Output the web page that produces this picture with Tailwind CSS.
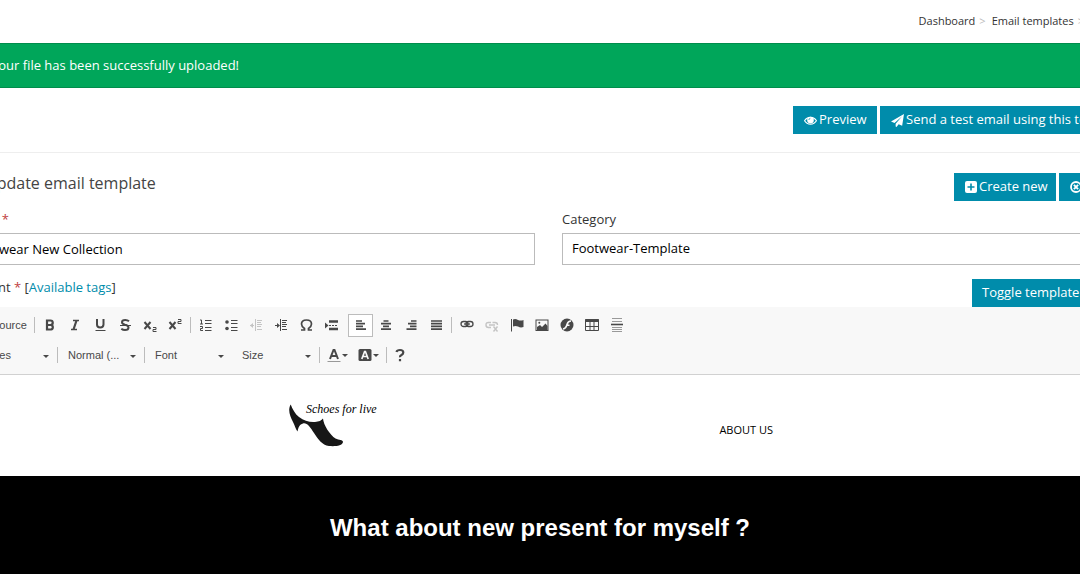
<!DOCTYPE html>
<html lang="en">
<head>
    <meta charset="UTF-8">
    <meta name="viewport" content="width=device-width, initial-scale=1.0">
    <title>Update email template</title>
    <script src="https://cdn.jsdelivr.net/npm/@tailwindcss/browser@4"></script>
</head>
<body class="bg-white overflow-hidden font-['Open_Sans',sans-serif] text-[13px] text-[#333]">
    <div class="overflow-hidden min-h-screen flex flex-col">
        <!-- Breadcrumbs -->
        <nav class="h-[43px] -mr-[55px] flex items-center justify-end gap-1 text-[11px]" aria-label="Breadcrumb">
            <a href="#">Dashboard</a><span class="text-[#bbb] pr-[2px]">&gt;</span>
            <a href="#">Email templates</a><span class="text-[#bbb] pr-[2px]">&gt;</span>
            <span class="w-[45px]">Update</span>
        </nav>

        <!-- Alert -->
        <div class="h-[45px] bg-[#00a65a] border-y border-[#008d4c] text-white flex items-center" role="alert">
            <p class="-ml-[9px]">Your file has been successfully uploaded!</p>
        </div>

        <main class="-ml-[38px] -mr-[55px] grow flex flex-col">
            <div class="pt-[18px] pb-[18px] border-b border-[#eee] flex justify-end gap-[3px] text-white whitespace-nowrap">
                <button class="w-[84px] h-7 pl-[11px] bg-[#008cab] flex items-center gap-[2px]">
                    <svg class="w-[13px] h-[13px] shrink-0" viewBox="0 0 14 14" fill="none" stroke="currentColor"><path d="M.6 7.3C3.5 2.4 10.500 2.400 13.400 7.300C10.500 12.200 3.500 12.200 .6 7.300Z" stroke-width="1.200"/><circle cx="7" cy="6.500" r="3.600" fill="currentColor" stroke="none"/><path d="M5.200 6.400Q5.300 4.900 6.800 4.700" stroke="#008cab" stroke-width=".8"/></svg>
                    Preview
                </button>
                <button class="w-[255px] h-7 pl-[11px] bg-[#008cab] flex items-center gap-[2px]">
                    <svg class="w-[13px] h-[13px] shrink-0" viewBox="0 0 14 14" fill="currentColor"><path d="M14 0L12 12.700L8.200 11.100L6 13.900L5 13.500V10.500L12 2.500L3.800 9.600L0 8Z"/></svg>
                    Send a test email using this template
                </button>
            </div>

            <!-- Heading row -->
            <div class="pt-5 flex justify-between items-start">
                <h1 class="h-7 -mt-1 flex items-center gap-[7px] text-[16px] text-[#444]">
                    <svg class="w-4 h-4" viewBox="0 0 16 16" fill="currentColor"><path d="M1 3h14v2l-7 4-7-4zM1 6l7 4 7-4v7H1z"/></svg>
                    Update email template
                </h1>
                <div class="flex gap-[3px] text-white whitespace-nowrap">
                    <button class="w-[102px] h-7 pl-[11px] bg-[#008cab] flex items-center gap-[2px]">
                        <svg class="w-3 h-3 shrink-0" viewBox="0 0 12 12"><rect width="12" height="12" rx="2" fill="currentColor"/><path d="M6 2.500v7M2.500 6h7" stroke="#008cab" stroke-width="1.600"/></svg>
                        Create new
                    </button>
                    <button class="w-[76px] h-7 pl-[11px] bg-[#008cab] flex items-center gap-[3px]">
                        <svg class="w-3 h-3 shrink-0" viewBox="0 0 12 12" fill="none" stroke="currentColor"><circle cx="6" cy="6" r="5" stroke-width="1.800"/><path d="M3.900 3.900l4.200 4.200M8.100 3.900l-4.200 4.200" stroke-width="1.900"/></svg>
                        Cancel
                    </button>
                </div>
            </div>

            <!-- Fields -->
            <div class="pt-2 grid grid-cols-2 gap-[27px]">
                <div>
                    <label for="name" class="block h-6 leading-5">Name <span class="text-[#c04040]">*</span></label>
                    <input id="name" type="text" value="Footwear New Collection" class="w-full h-8 px-[9px] border border-[#bbb] text-black">
                </div>
                <div>
                    <label for="category" class="block h-6 leading-5">Category</label>
                    <select id="category" class="w-full h-8 px-[9px] border border-[#bbb] bg-white text-black appearance-none">
                        <option>Footwear-Template</option>
                    </select>
                </div>
            </div>
            <div class="pt-[14px] flex justify-between items-start">
                <p class="leading-4">Content <span class="text-[#c04040]">*</span> [<a href="#" class="text-[#008cab]">Available tags</a>]</p>
                <button class="w-[163px] h-7 pl-[10px] text-left bg-[#008cab] text-white whitespace-nowrap">Toggle template editor</button>
            </div>

            <!-- Editor toolbar -->
            <div class="bg-[#f8f8f8] border-b border-[#d1d1d1] h-[68px] pl-[9px] pt-[3px] text-[11px] text-[#484848] font-['Liberation_Sans',sans-serif]" role="toolbar">
                <div class="h-[30px] flex items-center">
                    <button class="w-[63px] pl-[2px] flex items-center gap-[3px]">
                        <svg class="w-4 h-4" viewBox="0 0 16 16" fill="none" stroke="currentColor"><path d="M3 1.500h7l3 3v10H3z"/></svg>
                        Source
                    </button>
                    <span class="w-px h-4 bg-[#bcbcbc] mr-[2px]"></span>
                    <button class="w-[25px] h-[23px] flex items-center justify-center" aria-label="Bold"><svg class="w-4 h-4" viewBox="0 0 16 16" fill="none" stroke="currentColor"><path d="M5 3.500H8.500a2 2 0 0 1 0 4.500H5zM5 8h4a2.300 2.300 0 0 1 0 4.500H5z" stroke-width="2.200"/></svg></button>
                    <button class="w-[25px] h-[23px] flex items-center justify-center" aria-label="Italic"><svg class="w-4 h-4" viewBox="0 0 16 16" fill="none" stroke="currentColor"><path d="M6 3.500h6M4 12.500h6" stroke-width="1.300"/><path d="M9.500 3.500l-3 9" stroke-width="2.200"/></svg></button>
                    <button class="w-[25px] h-[23px] flex items-center justify-center" aria-label="Underline"><svg class="w-4 h-4" viewBox="0 0 16 16" fill="none" stroke="currentColor"><path d="M5 2v5.500q0 3 3.200 3t3.300-3V2" stroke-width="2"/><path d="M3.500 13.500h10"/></svg></button>
                    <button class="w-[25px] h-[23px] flex items-center justify-center" aria-label="Strikethrough"><svg class="w-4 h-4" viewBox="0 0 16 16" fill="none" stroke="currentColor"><path d="M12 4.300Q10.500 3 8.300 3 5 3 5 5.300 5 7 8 7.800 11.500 8.600 11.500 10.500 11.500 13 8 13 6 13 4.300 11.700" stroke-width="2"/><path d="M3 8.500h11"/></svg></button>
                    <button class="w-[25px] h-[23px] flex items-center justify-center" aria-label="Subscript"><svg class="w-4 h-4" viewBox="0 0 16 16" fill="none" stroke="currentColor"><path d="M2.500 5l6 7M8.500 5l-6 7" stroke-width="2"/><path d="M11 10.500h3v2h-3v2h3.500"/></svg></button>
                    <button class="w-[25px] h-[23px] flex items-center justify-center" aria-label="Superscript"><svg class="w-4 h-4" viewBox="0 0 16 16" fill="none" stroke="currentColor"><path d="M2.500 5l6 7M8.500 5l-6 7" stroke-width="2"/><path d="M11 2.500h3v2h-3v2h3.500"/></svg></button>
                    <span class="w-px h-4 bg-[#bcbcbc] ml-[3px] mr-[2px]"></span>
                    <button class="w-[25px] h-[23px] flex items-center justify-center" aria-label="Numbered list"><svg class="w-4 h-4" viewBox="0 0 16 16" fill="none" stroke="currentColor"><path d="M2 3h1.500v4M2 7h3M2 9.500h2.500v2H2.500v2H5M7 3.500h6.500M7 6.500h6.500M7 10.500h6.500M7 13.500h6.500"/></svg></button>
                    <button class="w-[25px] h-[23px] flex items-center justify-center" aria-label="Bulleted list"><svg class="w-4 h-4" viewBox="0 0 16 16" fill="none" stroke="currentColor"><path d="M8 3.500h6.500M8 6.500h6.500M8 10.500h6.500M8 13.500h6.500"/><circle cx="4" cy="5" r="1.800" fill="currentColor" stroke="none"/><circle cx="4" cy="11.500" r="1.800" fill="currentColor" stroke="none"/></svg></button>
                    <button class="w-[25px] h-[23px] flex items-center justify-center text-[#c4c4c4]" aria-label="Decrease indent" disabled><svg class="w-4 h-4" viewBox="0 0 16 16" fill="none" stroke="currentColor"><path d="M7.500 2v12M9 3.500h5M9 5.500h4M9 7.500h5M9 9.500h4M9 12.500h5M2 8.500h4"/><path d="M5 6v5L2 8.500z" fill="currentColor" stroke="none"/></svg></button>
                    <button class="w-[25px] h-[23px] flex items-center justify-center" aria-label="Increase indent"><svg class="w-4 h-4" viewBox="0 0 16 16" fill="none" stroke="currentColor"><path d="M7.500 2v12M9 3.500h5M9 5.500h4M9 7.500h5M9 9.500h4M9 12.500h5M2 8.500h3"/><path d="M4 6v5L7 8.500z" fill="currentColor" stroke="none"/></svg></button>
                    <button class="w-[25px] h-[23px] flex items-center justify-center" aria-label="Special character"><svg class="w-4 h-4" viewBox="0 0 16 16" fill="none" stroke="currentColor"><path d="M3 13h3.500v-1.500Q3.500 9.500 3.500 7 3.500 3 8.500 3t5 4q0 2.500-3 4.500V13H14" stroke-width="1.700"/></svg></button>
                    <button class="w-[25px] h-[23px] flex items-center justify-center" aria-label="Page break"><svg class="w-4 h-4" viewBox="0 0 16 16" fill="none" stroke="currentColor"><path d="M6 4.500h9M6 12h9" stroke-width="2.500"/><path d="M6 8.500h9" stroke-dasharray="2 1"/><path d="M2 5.500v6L5.500 8.500z" fill="currentColor" stroke="none"/></svg></button>
                    <button class="w-[25px] h-[23px] ml-[5px] border border-[#bcbcbc] bg-white flex items-center justify-center" aria-label="Align left" aria-pressed="true"><svg class="w-4 h-4" viewBox="0 0 16 16" fill="none" stroke="currentColor"><path d="M3 4h6M3 6.700h9M3 9.400h7M3 12.100h10" stroke-width="1.700"/></svg></button>
                    <button class="w-[25px] h-[23px] flex items-center justify-center" aria-label="Center"><svg class="w-4 h-4" viewBox="0 0 16 16" fill="none" stroke="currentColor"><path d="M5.500 4h5M3 6.700h10M5 9.400h6M3 12.100h10" stroke-width="1.700"/></svg></button>
                    <button class="w-[25px] h-[23px] flex items-center justify-center" aria-label="Align right"><svg class="w-4 h-4" viewBox="0 0 16 16" fill="none" stroke="currentColor"><path d="M8 4h5.500M5 6.700h8.500M7 9.400h6.500M3.500 12.100h10" stroke-width="1.700"/></svg></button>
                    <button class="w-[25px] h-[23px] flex items-center justify-center" aria-label="Justify"><svg class="w-4 h-4" viewBox="0 0 16 16" fill="none" stroke="currentColor"><path d="M3 4h11M3 6.700h11M3 9.400h11M3 12.100h11" stroke-width="1.700"/></svg></button>
                    <span class="w-px h-4 bg-[#bcbcbc] ml-[3px] mr-[2px]"></span>
                    <button class="w-[25px] h-[23px] flex items-center justify-center" aria-label="Link"><svg class="w-4 h-4" viewBox="0 0 16 16" fill="none" stroke="currentColor"><rect x="2" y="4.500" width="7" height="5" rx="2.500" stroke-width="1.300"/><rect x="7" y="4.500" width="7" height="5" rx="2.500" stroke-width="1.300"/><path d="M5 7h6" stroke-width="1.300"/></svg></button>
                    <button class="w-[25px] h-[23px] flex items-center justify-center text-[#c4c4c4]" aria-label="Unlink" disabled><svg class="w-4 h-4" viewBox="0 0 16 16" fill="none" stroke="currentColor"><path d="M7 5.500H4.500Q2 5.500 2 8t2.500 2.500H7M8.500 5.500H11q2.500 0 2.500 2.500M5 8h6" stroke-width="1.400"/><path d="M9.500 9.500l4 5M13.500 9.500l-4 5" stroke-width="1.400"/></svg></button>
                    <button class="w-[25px] h-[23px] flex items-center justify-center" aria-label="Anchor"><svg class="w-4 h-4" viewBox="0 0 16 16" fill="none" stroke="currentColor"><path d="M2.500 2v12.500"/><path d="M4 2.500q2.500-1 5 .5 2.500 1 5.500 0v7q-3 1-5.500-.5-2.500-1-5 0z" fill="currentColor" stroke="none"/></svg></button>
                    <button class="w-[25px] h-[23px] flex items-center justify-center" aria-label="Image"><svg class="w-4 h-4" viewBox="0 0 16 16" fill="none" stroke="currentColor"><rect x="2" y="3" width="12" height="10.500"/><path d="M3 13v-3l3-2 2 2 3.500-3.500L13.500 9v4z" fill="currentColor" stroke="none"/><circle cx="5.300" cy="5.800" r="1" fill="currentColor" stroke="none"/></svg></button>
                    <button class="w-[25px] h-[23px] flex items-center justify-center" aria-label="Flash"><svg class="w-4 h-4" viewBox="0 0 16 16"><circle cx="8" cy="8" r="6.500" fill="currentColor"/><path d="M12 4Q9 4 8 7.500 7 11.500 4 12M7.500 8.200h3" fill="none" stroke="#f8f8f8" stroke-width="1.600"/></svg></button>
                    <button class="w-[25px] h-[23px] flex items-center justify-center" aria-label="Table"><svg class="w-4 h-4" viewBox="0 0 16 16" fill="none" stroke="currentColor"><path d="M1.500 2.500h13v11h-13zM1.500 9.500h13M6 5v8.500M10 5v8.500"/><path d="M1.500 3.500h13" stroke-width="3"/></svg></button>
                    <button class="w-[25px] h-[23px] flex items-center justify-center" aria-label="Horizontal line"><svg class="w-4 h-4" viewBox="0 0 16 16" fill="none" stroke="currentColor"><path d="M3 1.500h10M3 4.500h10M3 10.500h10M3 12.500h10M3 14.500h10" stroke="#999"/><path d="M2 7.500h12" stroke-width="1.600"/></svg></button>
                </div>

                <div class="h-[30px] flex items-center">
                    <div class="relative w-[87px] h-4 border-r border-[#bcbcbc]">
                        <select aria-label="Styles" class="w-full h-4 -mt-px pl-[10px] appearance-none"><option>Styles</option></select>
                        <span class="absolute right-[8px] top-[8px] border-x-3 border-t-3 border-x-transparent border-t-[#484848]"></span>
                    </div>
                    <div class="relative w-[87px] h-4 border-r border-[#bcbcbc]">
                        <select aria-label="Paragraph format" class="w-full h-4 -mt-px pl-[10px] appearance-none"><option>Normal (...</option></select>
                        <span class="absolute right-[8px] top-[8px] border-x-3 border-t-3 border-x-transparent border-t-[#484848]"></span>
                    </div>
                    <div class="relative w-[87px] h-4">
                        <select aria-label="Font" class="w-full h-4 -mt-px pl-[10px] appearance-none"><option>Font</option></select>
                        <span class="absolute right-[8px] top-[8px] border-x-3 border-t-3 border-x-transparent border-t-[#484848]"></span>
                    </div>
                    <div class="relative w-[88px] h-4 border-r border-[#bcbcbc]">
                        <select aria-label="Size" class="w-full h-4 -mt-px pl-[10px] appearance-none"><option>Size</option></select>
                        <span class="absolute right-[8px] top-[8px] border-x-3 border-t-3 border-x-transparent border-t-[#484848]"></span>
                    </div>
                    <button class="w-[31px] pl-[6px] flex items-center" aria-label="Text color">
                        <svg class="w-4 h-4" viewBox="0 0 16 16" fill="none" stroke="currentColor"><path d="M4 12l3.500-9h1L12 12M5.500 9h5" stroke-width="2"/><path d="M1.500 14.500h13" stroke="#999"/></svg>
                        <span class="border-x-3 border-t-3 border-x-transparent border-t-[#484848]"></span>
                    </button>
                    <button class="w-[35px] pl-[6px] flex items-center" aria-label="Background color">
                        <svg class="w-4 h-4" viewBox="0 0 16 16"><rect x="1.500" y="2" width="13" height="12" rx="1.500" fill="currentColor"/><path d="M4.800 12l2.800-7.500h.8L11.200 12M6 9.500h4" fill="none" stroke="#f8f8f8" stroke-width="1.700"/></svg>
                        <span class="border-x-3 border-t-3 border-x-transparent border-t-[#484848]"></span>
                    </button>
                    <span class="w-px h-4 bg-[#bcbcbc]"></span>
                    <button class="w-[25px] h-[23px] flex items-center justify-center" aria-label="About"><svg class="w-4 h-4" viewBox="0 0 16 16" fill="none" stroke="currentColor" stroke-width="2.200"><path d="M4.500 5Q5 3 8 3q3.300 0 3.300 2.500 0 1.500-1.800 2.500T8 10.300M8 12v2.200"/></svg></button>
                </div>
            </div>

            <!-- Template content -->
            <div class="h-[101px] pl-[326px] pr-[362px] flex justify-between items-start text-black">
                <div class="relative w-[90px] pt-[26px]">
                    <svg class="w-[56px] h-[48px]" viewBox="0 0 56 48" fill="#171717"><path d="M2.700 3.500C4.500 8 7 13 11 16C16 20 22 21.500 27 21C31 20.700 33.500 19.500 35 17.500C35.500 24 42 34 47.500 37.500C51 39.500 55 38.500 55 41C54.500 45 47 45.500 41 45C34 44 30 38 26 32C22 26 19 21.500 15 22.500C11.500 23.500 10.500 26 9.500 30.500C7.500 28 7 25 5 21C2 15-.500 9 2.700 3.500Z"/></svg>
                    <span class="absolute left-[18px] top-[26px] text-[12px] leading-4 italic whitespace-nowrap font-['Liberation_Serif',serif]">Schoes for live</span>
                </div>
                <a href="#" class="mt-[47px] text-[11px] leading-4">ABOUT US</a>
            </div>
            <div class="grow bg-black text-white pt-9 pr-[17px] text-center">
                <h2 class="text-[24px] leading-8 font-bold font-['Liberation_Sans',sans-serif]">What about new present for myself ?</h2>
            </div>
        </main>
    </div>
</body>
</html>
